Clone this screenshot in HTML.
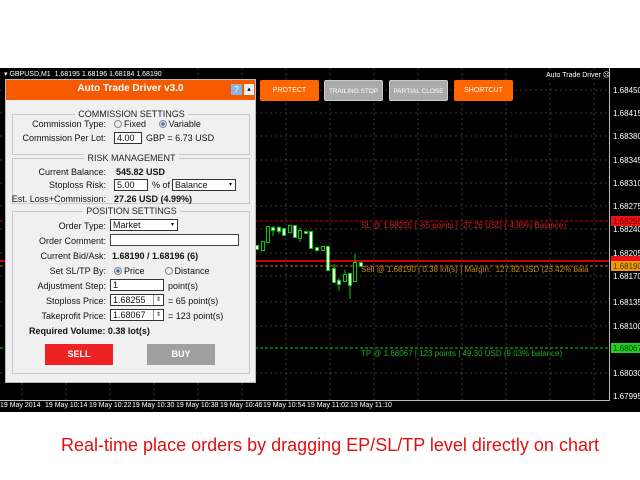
<!DOCTYPE html>
<html><head><meta charset="utf-8"><style>
*{margin:0;padding:0;box-sizing:border-box}
body{width:640px;height:480px;background:#fff;position:relative;overflow:hidden;font-family:"Liberation Sans",sans-serif}
.a{position:absolute;white-space:nowrap}
#chart{position:absolute;left:0;top:68px;width:640px;height:344px;background:#000}
.p{font-size:8px;color:#fff;left:613px}
.t{font-size:7px;color:#fff;top:334px}
.btn{position:absolute;top:80px;height:21px;width:59px;font-size:7px;color:#fff;text-align:center;line-height:21px;border-radius:2px;white-space:nowrap;overflow:hidden}
#panel{position:absolute;left:5px;top:79px;width:251px;height:304px;background:#f0f0f0;border:1px solid #bbb}
.box{position:absolute;left:6px;width:238px;border:1px solid #c8c8c8}
.hd{position:absolute;left:0;width:251px;text-align:center;font-size:9px;color:#222}
.hd span{background:#f0f0f0;padding:0 3px}
.l{position:absolute;font-size:9px;color:#111;right:149px;text-align:right}
.v{position:absolute;font-size:9px;color:#111;left:106px}
.b{font-weight:bold}
.in{position:absolute;height:12px;border:1px solid #333;background:#fff;font-size:9px;line-height:10px;padding-left:2px;color:#111}
.rad{display:inline-block;width:8px;height:8px;border-radius:50%;border:1px solid #888;background:#eee;vertical-align:-1px;margin-right:2px}
.rad.on{background:radial-gradient(#2a6fc7 35%,#dde 45%)}
</style></head><body>
<div id="chart">
<svg width="640" height="344" style="position:absolute;left:0;top:0">
<g stroke="#3a3a3a" stroke-dasharray="2,3" stroke-width="1">
<line x1="0" y1="22" x2="609" y2="22"/><line x1="0" y1="45" x2="609" y2="45"/><line x1="0" y1="68" x2="609" y2="68"/><line x1="0" y1="92" x2="609" y2="92"/><line x1="0" y1="115" x2="609" y2="115"/><line x1="0" y1="138" x2="609" y2="138"/><line x1="0" y1="161" x2="609" y2="161"/><line x1="0" y1="185" x2="609" y2="185"/><line x1="0" y1="208" x2="609" y2="208"/><line x1="0" y1="234" x2="609" y2="234"/><line x1="0" y1="258" x2="609" y2="258"/><line x1="0" y1="305" x2="609" y2="305"/>
<line x1="22" y1="0" x2="22" y2="332"/><line x1="66" y1="0" x2="66" y2="332"/><line x1="110" y1="0" x2="110" y2="332"/><line x1="154" y1="0" x2="154" y2="332"/><line x1="198" y1="0" x2="198" y2="332"/><line x1="242" y1="0" x2="242" y2="332"/><line x1="286" y1="0" x2="286" y2="332"/><line x1="330" y1="0" x2="330" y2="332"/><line x1="374" y1="0" x2="374" y2="332"/><line x1="418" y1="0" x2="418" y2="332"/><line x1="462" y1="0" x2="462" y2="332"/><line x1="506" y1="0" x2="506" y2="332"/><line x1="550" y1="0" x2="550" y2="332"/><line x1="594" y1="0" x2="594" y2="332"/>
</g>
<line x1="609.5" y1="0" x2="609.5" y2="333" stroke="#bbb"/>
<line x1="0" y1="332.5" x2="610" y2="332.5" stroke="#bbb"/>
<line x1="0" y1="153" x2="609" y2="153" stroke="#d00" stroke-dasharray="3,2"/>
<line x1="0" y1="193" x2="609" y2="193" stroke="#c00" stroke-width="2"/>
<line x1="0" y1="198" x2="609" y2="198" stroke="#c87000" stroke-dasharray="3,2"/>
<line x1="0" y1="280" x2="609" y2="280" stroke="#1c1" stroke-dasharray="3,2"/>
<g stroke="#0c0" stroke-width="1">
<rect x="255.5" y="177.5" width="3" height="4" fill="#fff"/>
<rect x="261.5" y="173.5" width="3" height="9" fill="#000"/>
<rect x="266.5" y="158.5" width="3" height="16" fill="#000"/>
<line x1="273" y1="158" x2="273" y2="168"/><rect x="271.5" y="159.5" width="3" height="3" fill="#fff"/>
<line x1="279" y1="158" x2="279" y2="166"/><rect x="277.5" y="159.5" width="3" height="4" fill="#fff"/>
<rect x="282.5" y="160.5" width="3" height="7" fill="#fff"/>
<rect x="288.5" y="157.5" width="3" height="7" fill="#000"/>
<rect x="293.5" y="157.5" width="3" height="12" fill="#fff"/>
<line x1="300" y1="160" x2="300" y2="174"/><rect x="298.5" y="162.5" width="3" height="8" fill="#000"/>
<rect x="304.5" y="163.5" width="3" height="2" fill="#fff"/>
<rect x="309.5" y="163.5" width="3" height="17" fill="#fff"/>
<rect x="315.5" y="179.5" width="3" height="3" fill="#fff"/>
<rect x="321.5" y="178.5" width="3" height="4" fill="#000"/>
<rect x="326.5" y="178.5" width="3" height="24" fill="#fff"/>
<line x1="334" y1="196" x2="334" y2="214"/><rect x="332.5" y="200.5" width="3" height="14" fill="#fff"/>
<line x1="339" y1="210" x2="339" y2="223"/><rect x="337.5" y="212.5" width="3" height="4" fill="#fff"/>
<line x1="345" y1="202" x2="345" y2="214"/><rect x="343.5" y="206.5" width="3" height="7" fill="#000"/>
<line x1="350" y1="205" x2="350" y2="231"/><rect x="348.5" y="205.5" width="3" height="12" fill="#fff"/>
<line x1="355" y1="186" x2="355" y2="213"/><rect x="353.5" y="194.5" width="3" height="19" fill="#000"/>
<rect x="359.5" y="194.5" width="3" height="4" fill="#fff"/>
</g>
<rect x="611" y="148" width="29" height="10" fill="#e11"/>
<rect x="611" y="188" width="29" height="7" fill="#e11"/>
<rect x="611" y="193" width="29" height="10" fill="#f39a00"/>
<rect x="611" y="275" width="29" height="10" fill="#2c2"/>
</svg>
<div class="a" style="left:4px;top:2px;font-size:7px;color:#fff">▾ GBPUSD,M1 &nbsp;1.68195 1.68196 1.68184 1.68190</div>
<div class="a" style="left:546px;top:3px;font-size:7px;color:#fff">Auto Trade Driver ☹</div>
<div class="a p" style="top:18px">1.68450</div>
<div class="a p" style="top:41px">1.68415</div>
<div class="a p" style="top:64px">1.68380</div>
<div class="a p" style="top:88px">1.68345</div>
<div class="a p" style="top:111px">1.68310</div>
<div class="a p" style="top:134px">1.68275</div>
<div class="a p" style="top:149px;color:#600">1.68255</div>
<div class="a p" style="top:157px">1.68240</div>
<div class="a p" style="top:181px">1.68205</div>
<div class="a p" style="top:194px;color:#333">1.68190</div>
<div class="a p" style="top:204px">1.68170</div>
<div class="a p" style="top:230px">1.68135</div>
<div class="a p" style="top:254px">1.68100</div>
<div class="a p" style="top:276px;color:#040">1.68067</div>
<div class="a p" style="top:301px">1.68030</div>
<div class="a p" style="top:324px">1.67995</div>
<div class="a" style="left:361px;top:153px;font-size:8px;color:#c22">SL @ 1.68255 | -65 points | -27.26 USD (-4.99% Balance)</div>
<div class="a" style="left:361px;top:197px;font-size:8px;color:#c88a10">Sell @ 1.68190 | 0.38 lot(s) | Margin:&nbsp; 127.82 USD (23.42% bala</div>
<div class="a" style="left:361px;top:281px;font-size:8px;color:#2a2">TP @ 1.68067 | 123 points | 49.30 USD (9.03% balance)</div>
<div class="a t" style="left:0">19 May 2014</div>
<div class="a t" style="left:45px">19 May 10:14</div>
<div class="a t" style="left:89px">19 May 10:22</div>
<div class="a t" style="left:132px">19 May 10:30</div>
<div class="a t" style="left:176px">19 May 10:38</div>
<div class="a t" style="left:220px">19 May 10:46</div>
<div class="a t" style="left:263px">19 May 10:54</div>
<div class="a t" style="left:307px">19 May 11:02</div>
<div class="a t" style="left:350px">19 May 11:10</div>
</div>
<div class="btn" style="left:260px;background:#f60">PROTECT</div>
<div class="btn" style="left:324px;background:#aaa;border:1px solid #ccc;font-size:6.5px">TRAILING STOP</div>
<div class="btn" style="left:389px;background:#aaa;border:1px solid #ccc;font-size:6.5px">PARTIAL CLOSE</div>
<div class="btn" style="left:454px;background:#f60">SHORTCUT</div>

<div id="panel">
<div class="a" style="left:0;top:0;width:249px;height:20px;background:#f55a00"></div>
<div class="a" style="left:0;top:3px;width:249px;text-align:center;color:#fff;font-weight:bold;font-size:10px">Auto Trade Driver v3.0</div>
<div class="a" style="left:225px;top:4px;width:11px;height:11px;background:#8ab4e0;color:#fff;font-size:8px;text-align:center;line-height:11px">?</div>
<div class="a" style="left:238px;top:4px;width:10px;height:11px;background:#eee;font-size:7px;text-align:center;line-height:11px">▴</div>

<div class="box" style="top:34px;height:41px"></div>
<div class="hd" style="top:29px"><span>COMMISSION SETTINGS</span></div>
<div class="l" style="top:39px">Commission Type:</div>
<div class="v" style="top:39px;left:108px"><span class="rad"></span>Fixed &nbsp;&nbsp;&nbsp;&nbsp;<span class="rad on"></span>Variable</div>
<div class="l" style="top:53px">Commission Per Lot:</div>
<div class="in" style="left:108px;top:52px;width:28px">4.00</div>
<div class="v" style="top:53px;left:140px">GBP = 6.73 USD</div>

<div class="box" style="top:78px;height:46px"></div>
<div class="hd" style="top:73px"><span>RISK MANAGEMENT</span></div>
<div class="l" style="top:87px">Current Balance:</div>
<div class="v b" style="top:87px;left:110px">545.82 USD</div>
<div class="l" style="top:100px">Stoploss Risk:</div>
<div class="in" style="left:108px;top:99px;width:34px">5.00</div>
<div class="v" style="top:100px;left:146px">% of</div>
<div class="in" style="left:166px;top:99px;width:64px">Balance<span style="position:absolute;right:3px;font-size:6px">▾</span></div>
<div class="l" style="top:114px">Est. Loss+Commission:</div>
<div class="v b" style="top:114px;left:108px">27.26 USD (4.99%)</div>

<div class="box" style="top:131px;height:163px"></div>
<div class="hd" style="top:126px"><span>POSITION SETTINGS</span></div>
<div class="l" style="top:141px">Order Type:</div>
<div class="in" style="left:104px;top:139px;width:68px">Market<span style="position:absolute;right:3px;font-size:6px">▾</span></div>
<div class="l" style="top:156px">Order Comment:</div>
<div class="in" style="left:104px;top:154px;width:129px;border-color:#444"></div>
<div class="l" style="top:171px">Current Bid/Ask:</div>
<div class="v b" style="top:171px;left:106px">1.68190 / 1.68196 (6)</div>
<div class="l" style="top:186px">Set SL/TP By:</div>
<div class="v" style="top:186px;left:108px"><span class="rad on"></span>Price &nbsp;&nbsp;&nbsp;&nbsp;&nbsp;&nbsp;&nbsp;<span class="rad"></span>Distance</div>
<div class="l" style="top:201px">Adjustment Step:</div>
<div class="in" style="left:104px;top:199px;width:54px">1</div>
<div class="v" style="top:201px;left:162px">point(s)</div>
<div class="l" style="top:216px">Stoploss Price:</div>
<div class="in" style="left:104px;top:214px;width:54px">1.68255<span style="position:absolute;right:0;top:0;width:10px;height:10px;border-left:1px solid #999;font-size:6px;text-align:center">⇕</span></div>
<div class="v" style="top:216px;left:162px">= 65 point(s)</div>
<div class="l" style="top:231px">Takeprofit Price:</div>
<div class="in" style="left:104px;top:229px;width:54px">1.68067<span style="position:absolute;right:0;top:0;width:10px;height:10px;border-left:1px solid #999;font-size:6px;text-align:center">⇕</span></div>
<div class="v" style="top:231px;left:162px">= 123 point(s)</div>
<div class="a b" style="left:23px;top:246px;font-size:9px;color:#111">Required Volume: 0.38 lot(s)</div>
<div class="a" style="left:39px;top:264px;width:68px;height:21px;background:#ee2222;color:#fff;font-weight:bold;font-size:9px;text-align:center;line-height:21px">SELL</div>
<div class="a" style="left:141px;top:264px;width:68px;height:21px;background:#a0a0a0;color:#fff;font-weight:bold;font-size:9px;text-align:center;line-height:21px">BUY</div>
</div>

<div class="a" style="left:10px;top:435px;width:640px;text-align:center;font-size:18px;color:#e01010">Real-time place orders by dragging EP/SL/TP level directly on chart</div>
</body></html>
